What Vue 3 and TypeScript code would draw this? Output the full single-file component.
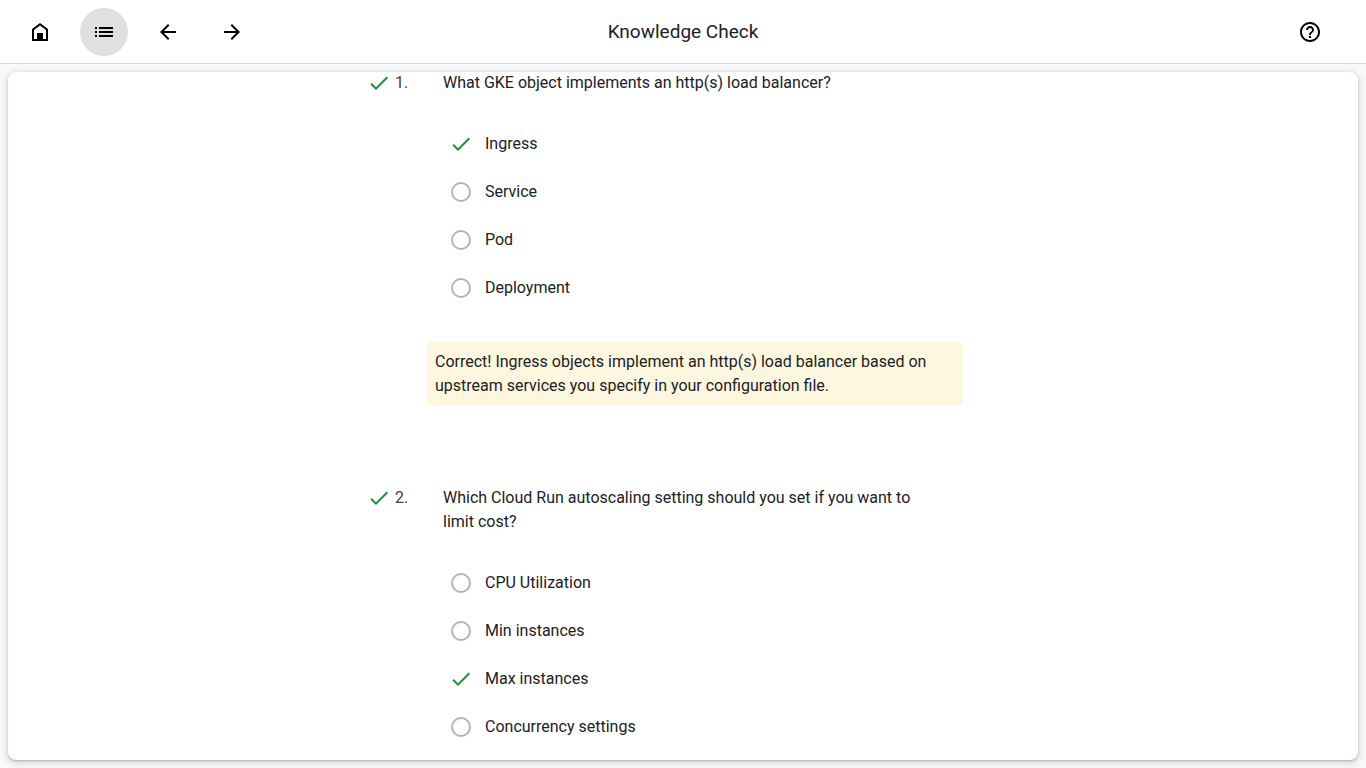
<script setup lang="ts">
import { ref } from 'vue'

interface Question {
  id: number
  prompt: string
  options: string[]
  answer: string
  feedback?: string
}

const questions: Question[] = [
  {
    id: 1,
    prompt: 'What GKE object implements an http(s) load balancer?',
    options: ['Ingress', 'Service', 'Pod', 'Deployment'],
    answer: 'Ingress',
    feedback:
      'Correct! Ingress objects implement an http(s) load balancer based on upstream services you specify in your configuration file.',
  },
  {
    id: 2,
    prompt: 'Which Cloud Run autoscaling setting should you set if you want to limit cost?',
    options: ['CPU Utilization', 'Min instances', 'Max instances', 'Concurrency settings'],
    answer: 'Max instances',
  },
]

const selected = ref<Record<number, string>>({ 1: 'Ingress', 2: 'Max instances' })

const navigation = [
  { label: 'Home', active: false, path: 'M4 21V9l8-6 8 6v12H4zm2-2h3v-6h6v6h3v-9l-6-4.5L6 10v9z' },
  {
    label: 'Outline',
    active: true,
    path: 'M3 13h2v-2H3v2zm0 4h2v-2H3v2zm0-8h2V7H3v2zm4 4h14v-2H7v2zm0 4h14v-2H7v2zM7 7v2h14V7H7z',
  },
  {
    label: 'Previous',
    active: false,
    path: 'M20 11H7.83l5.59-5.59L12 4l-8 8 8 8 1.41-1.41L7.83 13H20v-2z',
  },
  {
    label: 'Next',
    active: false,
    path: 'M12 4l-1.41 1.41L16.17 11H4v2h12.17l-5.58 5.59L12 20l8-8z',
  },
]

const helpPath =
  'M11 18h2v-2h-2v2zm1-16C6.48 2 2 6.48 2 12s4.48 10 10 10 10-4.48 10-10S17.52 2 12 2zm0 18c-4.41 0-8-3.59-8-8s3.59-8 8-8 8 3.59 8 8-3.59 8-8 8zm0-14c-2.21 0-4 1.79-4 4h2c0-1.1.9-2 2-2s2 .9 2 2c0 2-3 1.75-3 5h2c0-2.25 3-2.5 3-5 0-2.21-1.79-4-4-4z'
const checkPath = 'M9 16.17L4.83 12l-1.42 1.41L9 19 21 7l-1.41-1.41z'
</script>

<template>
  <div class="page">
    <header class="toolbar">
      <nav class="actions">
        <button
          v-for="item in navigation"
          :key="item.label"
          type="button"
          class="icon-button"
          :class="{ active: item.active }"
          :aria-label="item.label"
        >
          <svg class="icon" viewBox="0 0 24 24" aria-hidden="true"><path :d="item.path" /></svg>
        </button>
      </nav>
      <h1 class="title">Knowledge Check</h1>
      <div class="actions end">
        <button type="button" class="icon-button" aria-label="Help">
          <svg class="icon" viewBox="0 0 24 24" aria-hidden="true"><path :d="helpPath" /></svg>
        </button>
      </div>
    </header>

    <main class="card">
      <form class="quiz">
        <section v-for="q in questions" :key="q.id" class="question">
          <div class="prompt">
            <svg class="icon check" viewBox="0 0 24 24" aria-hidden="true">
              <path v-if="selected[q.id] === q.answer" :d="checkPath" />
            </svg>
            <span class="number">{{ q.id }}.</span>
            <p :id="`prompt-${q.id}`" class="prompt-text">{{ q.prompt }}</p>
          </div>

          <div class="options" role="radiogroup" :aria-labelledby="`prompt-${q.id}`">
            <label v-for="option in q.options" :key="option" class="option">
              <span class="mark">
                <input v-model="selected[q.id]" type="radio" :name="`question-${q.id}`" :value="option" />
                <svg
                  v-if="selected[q.id] === option"
                  class="icon check"
                  viewBox="0 0 24 24"
                  aria-hidden="true"
                >
                  <path :d="checkPath" />
                </svg>
              </span>
              <span>{{ option }}</span>
            </label>
          </div>

          <p v-if="q.feedback" class="feedback">{{ q.feedback }}</p>
        </section>
      </form>
    </main>
  </div>
</template>

<style>
body {
  margin: 0;
}
</style>

<style scoped>
.page {
  box-sizing: border-box;
  display: flex;
  flex-direction: column;
  height: 100vh;
  background: #f8f9fa;
  color: #202124;
  font-family: Roboto, 'Liberation Sans', sans-serif;
  font-size: 16px;
  line-height: 24px;
}

.toolbar {
  box-sizing: border-box;
  flex: none;
  display: grid;
  grid-template-columns: 1fr auto 1fr;
  align-items: center;
  height: 64px;
  padding: 0 32px 0 16px;
  background: #fff;
  border-bottom: 1px solid #dadce0;
}

.actions {
  display: flex;
  gap: 16px;
}

.end {
  justify-content: flex-end;
}

.icon-button {
  display: grid;
  place-items: center;
  width: 48px;
  height: 48px;
  padding: 0;
  border: 0;
  border-radius: 50%;
  background: transparent;
  color: #000;
  cursor: pointer;
}

.icon-button.active {
  background: #e0e0e0;
}

.icon {
  display: block;
  width: 24px;
  height: 24px;
  fill: currentColor;
}

.title {
  margin: 0 0 0 16px;
  font-size: 19px;
  font-weight: 400;
}

.card {
  flex: 1;
  min-height: 0;
  margin: 8px;
  overflow: hidden auto;
  background: #fff;
  border-radius: 8px;
  box-shadow: 0 1px 2px rgba(60, 64, 67, 0.3), 0 2px 6px 2px rgba(60, 64, 67, 0.15);
}

.quiz {
  box-sizing: border-box;
  max-width: 632px;
  margin: -1px auto 0;
  padding-right: 36px;
}

.question + .question {
  margin-top: 80px;
}

.prompt {
  display: grid;
  grid-template-columns: 24px 44px 1fr;
  column-gap: 4px;
  padding-right: 24px;
}

.check {
  color: #1e8e3e;
}

.number {
  color: #3c4043;
}

.prompt-text {
  margin: 0;
}

.options {
  margin-top: 25px;
  padding-left: 82px;
}

.option {
  display: flex;
  align-items: center;
  gap: 12px;
  height: 48px;
  cursor: pointer;
}

.mark {
  display: grid;
  place-items: center;
  width: 24px;
  height: 24px;
}

.mark > * {
  grid-area: 1 / 1;
}

.mark input {
  appearance: none;
  box-sizing: border-box;
  width: 20px;
  height: 20px;
  margin: 0;
  border: 2px solid #b4b4b4;
  border-radius: 50%;
}

.mark input:checked {
  border-color: transparent;
}

.feedback {
  margin: 30px 0 0 60px;
  padding: 8px;
  border-radius: 4px;
  background: #fef7e0;
}
</style>
